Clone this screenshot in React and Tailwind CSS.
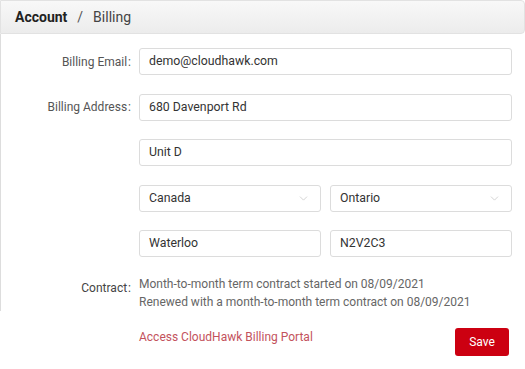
import { ChevronDown } from 'lucide-react'

const font = { fontFamily: 'Roboto, "Liberation Sans", sans-serif' }

const Field = ({ value, select }) => (
  <div className="flex-1 h-[27px] flex items-center justify-between pl-[9px] pr-[10px] border border-[#dcdcdc] rounded-[3px] bg-white text-[12.3px] text-[#333]">
    <span>{value}</span>
    {select && <ChevronDown size={13} strokeWidth={1.2} className="text-[#bdbdbd]" />}
  </div>
)

const Row = ({ label, children }) => (
  <div className="flex items-center">
    <div className="w-[138px] shrink-0 pr-[8px] text-right text-[12px] text-[#555]">
      {label && <>{label}<span className="ml-[1px]">:</span></>}
    </div>
    <div className="flex-1 flex gap-[9px] pr-[13px]">{children}</div>
  </div>
)

export default function App() {
  return (
    <div className="w-[525px] h-[369px] bg-white overflow-hidden" style={font}>
      {/* Header */}
      <div className="h-[34px] flex items-center gap-[10px] pl-[14px] border border-[#e2e2e2] rounded-r-[4px] bg-gradient-to-b from-[#f8f8f8] to-[#ececec] text-[14px]">
        <span className="font-bold text-[#222]">Account</span>
        <span className="text-[#555]">/</span>
        <span className="text-[#444]">Billing</span>
      </div>

      {/* Form */}
      <div className="border-l border-[#dddddd] pt-[14px] flex flex-col gap-[18.5px]">
        <Row label="Billing Email">
          <Field value="demo@cloudhawk.com" />
        </Row>
        <Row label="Billing Address">
          <Field value="680 Davenport Rd" />
        </Row>
        <Row>
          <Field value="Unit D" />
        </Row>
        <Row>
          <Field value="Canada" select />
          <Field value="Ontario" select />
        </Row>
        <Row>
          <Field value="Waterloo" />
          <Field value="N2V2C3" />
        </Row>
        <div className="flex items-start mt-[-1px]">
          <div className="w-[138px] shrink-0 pr-[8px] text-right text-[12px] leading-[18px] text-[#444] pt-[4px]">
            Contract<span className="ml-[1px]">:</span>
          </div>
          <div className="text-[12px] leading-[18px] text-[#666]">
            <div>Month-to-month term contract started on 08/09/2021</div>
            <div>Renewed with a month-to-month term contract on 08/09/2021</div>
          </div>
        </div>
      </div>

      {/* Footer */}
      <div className="flex items-start pl-[139px] pr-[16px] pt-[17px]">
        <span className="flex-1 text-[12px] leading-[18px] text-[#c3525c]">Access CloudHawk Billing Portal</span>
        <button className="w-[54px] h-[28px] rounded-[3px] bg-[#cc0011] text-white text-[12px]">Save</button>
      </div>
    </div>
  )
}
